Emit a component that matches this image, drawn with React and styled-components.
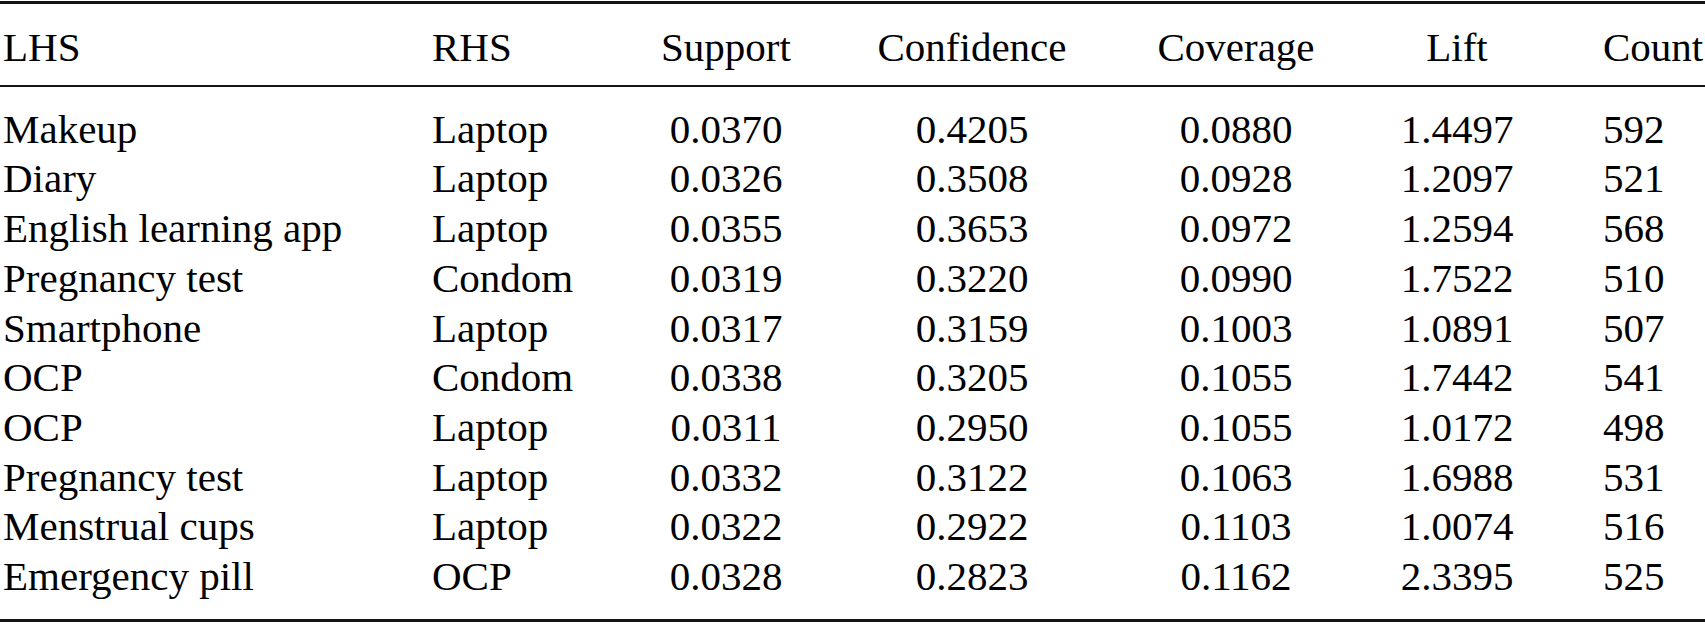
import React from "react";
import styled, { createGlobalStyle } from "styled-components";

const GlobalStyle = createGlobalStyle`
    html, body {
        margin: 0;
        padding: 0;
        background: #fff;
    }
`;

const rules = [
    ["Makeup", "Laptop", "0.0370", "0.4205", "0.0880", "1.4497", "592"],
    ["Diary", "Laptop", "0.0326", "0.3508", "0.0928", "1.2097", "521"],
    ["English learning app", "Laptop", "0.0355", "0.3653", "0.0972", "1.2594", "568"],
    ["Pregnancy test", "Condom", "0.0319", "0.3220", "0.0990", "1.7522", "510"],
    ["Smartphone", "Laptop", "0.0317", "0.3159", "0.1003", "1.0891", "507"],
    ["OCP", "Condom", "0.0338", "0.3205", "0.1055", "1.7442", "541"],
    ["OCP", "Laptop", "0.0311", "0.2950", "0.1055", "1.0172", "498"],
    ["Pregnancy test", "Laptop", "0.0332", "0.3122", "0.1063", "1.6988", "531"],
    ["Menstrual cups", "Laptop", "0.0322", "0.2922", "0.1103", "1.0074", "516"],
    ["Emergency pill", "OCP", "0.0328", "0.2823", "0.1162", "2.3395", "525"],
];

const headers = ["LHS", "RHS", "Support", "Confidence", "Coverage", "Lift", "Count"];
// left / center per column
const aligns = ["left", "left", "center", "center", "center", "center", "left"];

const Table = styled.div`
    width: 1705px;
    margin-top: 1px;
    border-top: 3px solid #141414;
    border-bottom: 3px solid #141414;
    font-family: "Liberation Serif", "Times New Roman", serif;
    color: #000;
    font-size: 41px;
    line-height: 49.7px;
`;

const Row = styled.div`
    display: grid;
    grid-template-columns: 432px 208px 172px 320px 208px 234px 131px;
    white-space: nowrap;
`;

const HeadSection = styled.div`
    padding: 19px 0 12px;
    border-bottom: 2.5px solid #141414;
`;

const BodySection = styled.div`
    padding: 18px 0 17px;
`;

const Cell = styled.div`
    text-align: ${(p) => p.$align};
    padding-left: ${(p) => (p.$col === 0 ? "3px" : p.$col === 6 ? "29px" : "0")};
`;

export default function App() {
    return (
        <>
            <GlobalStyle />
            <Table>
                <HeadSection>
                    <Row>
                        {headers.map((h, i) => (
                            <Cell key={h} $align={aligns[i]} $col={i}>
                                {h}
                            </Cell>
                        ))}
                    </Row>
                </HeadSection>
                <BodySection>
                    {rules.map((r, idx) => (
                        <Row key={idx}>
                            {r.map((v, i) => (
                                <Cell key={i} $align={aligns[i]} $col={i}>
                                    {v}
                                </Cell>
                            ))}
                        </Row>
                    ))}
                </BodySection>
            </Table>
        </>
    );
}
